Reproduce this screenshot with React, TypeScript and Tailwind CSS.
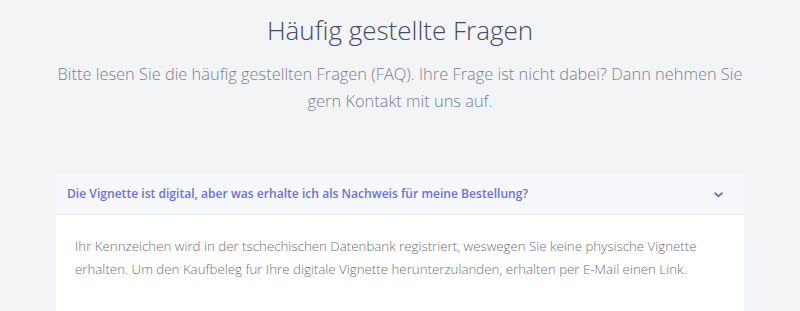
import React from "react";

export default function App() {
  return (
    <div
      className="w-full h-[311px] overflow-hidden bg-[#f3f4f6]"
      style={{ fontFamily: '"Open Sans", "Noto Sans", sans-serif' }}
    >
      <div className="w-[688px] mx-auto">
        <h1 className="mt-[10px] text-center text-[26px] leading-[40px] font-light text-[#454b63]">
          Häufig gestellte Fragen
        </h1>
        <p className="mt-[10px] -mx-[4px] text-center text-[16.4px] leading-[27px] font-light text-[#7a7f90]">
          Bitte lesen Sie die häufig gestellten Fragen (FAQ). Ihre Frage ist nicht dabei? Dann nehmen Sie gern Kontakt mit uns auf.
        </p>
        <div className="mt-[60px] bg-white">
          <div className="h-[41px] flex items-center justify-between pl-[11px] pr-[21px] bg-[#f5f7fa] border-b border-[#e6e9ee]">
            <span className="text-[12.1px] font-semibold text-[#6c73d2]">
              Die Vignette ist digital, aber was erhalte ich als Nachweis für meine Bestellung?
            </span>
            <svg width="9" height="6" viewBox="0 0 9 6" className="mt-[1px]">
              <path d="M1.2 1.2 L4.5 4.4 L7.8 1.2" fill="none" stroke="#6c73d2" strokeWidth="2" strokeLinecap="round" strokeLinejoin="round" />
            </svg>
          </div>
          <div className="px-[19px] pt-[20px] pb-[40px] text-[13.3px] leading-[23px] font-light text-[#6f6f6f]">
            Ihr Kennzeichen wird in der tschechischen Datenbank registriert, weswegen Sie keine physische Vignette erhalten. Um den Kaufbeleg fur Ihre digitale Vignette herunterzulanden, erhalten per E-Mail einen Link.
          </div>
        </div>
      </div>
    </div>
  );
}
